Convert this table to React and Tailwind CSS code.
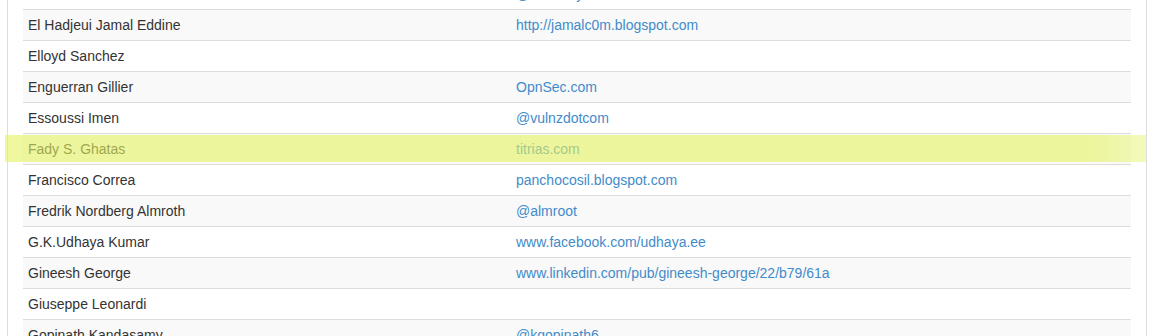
import React from "react";

const rows = [
  ["", "@elmehdy"],
  ["El Hadjeui Jamal Eddine", "http://jamalc0m.blogspot.com"],
  ["Elloyd Sanchez", ""],
  ["Enguerran Gillier", "OpnSec.com"],
  ["Essoussi Imen", "@vulnzdotcom"],
  ["Fady S. Ghatas", "titrias.com"],
  ["Francisco Correa", "panchocosil.blogspot.com"],
  ["Fredrik Nordberg Almroth", "@almroot"],
  ["G.K.Udhaya Kumar", "www.facebook.com/udhaya.ee"],
  ["Gineesh George", "www.linkedin.com/pub/gineesh-george/22/b79/61a"],
  ["Giuseppe Leonardi", ""],
  ["Gopinath Kandasamy", "@kgopinath6"],
];

export default function App() {
  return (
    <div
      className="relative h-[336px] w-[1153px] overflow-hidden bg-white text-[14px] leading-[20px] text-[#333]"
      style={{ fontFamily: '"Liberation Sans", Arial, Helvetica, sans-serif' }}
    >
      <div className="ml-[7px] w-[1140px] h-[400px] border-x border-[#ddd] px-[15px]">
        <table className="-mt-[22px] w-[1108px] border-collapse">
          <tbody>
            {rows.map(([name, link], i) => (
              <tr key={i} className={i % 2 === 1 ? "bg-[#f9f9f9]" : "bg-white"}>
                <td className="w-[488px] border-t border-[#ddd] px-[5px] py-[5px] align-top h-[31px]">
                  {name}
                </td>
                <td className="border-t border-[#ddd] px-[5px] py-[5px] align-top h-[31px]">
                  {link && <a className="text-[#428bca] no-underline">{link}</a>}
                </td>
              </tr>
            ))}
          </tbody>
        </table>
      </div>
      <div className="pointer-events-none absolute left-[5px] top-[135px] h-[27px] w-[1141px] bg-[linear-gradient(to_right,rgba(228,242,95,0.6)_0%,rgba(228,242,95,0.6)_95%,rgba(232,245,120,0.5)_100%)]" />
    </div>
  );
}
